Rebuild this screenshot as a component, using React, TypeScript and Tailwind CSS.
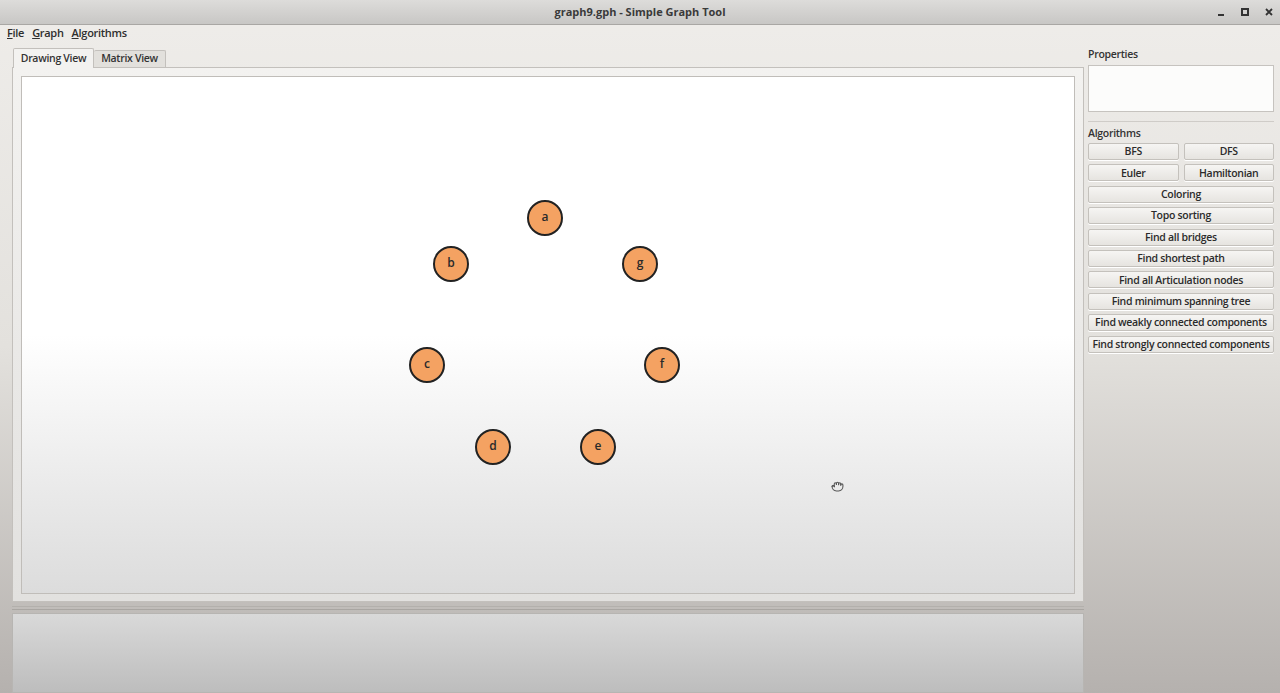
import { FunctionComponent } from 'react';
import { HandGrab } from 'lucide-react';

//  ---------------------------------------------------------------------------
//  DATA
//  ---------------------------------------------------------------------------

const nodes = [
  { id: 'a', x: 523, y: 141 },
  { id: 'b', x: 429, y: 187 },
  { id: 'g', x: 618, y: 187 },
  { id: 'c', x: 405, y: 288 },
  { id: 'f', x: 640, y: 288 },
  { id: 'd', x: 471, y: 370 },
  { id: 'e', x: 576, y: 370 },
];

const singleButtons = [
  'Coloring',
  'Topo sorting',
  'Find all bridges',
  'Find shortest path',
  'Find all Articulation nodes',
  'Find minimum spanning tree',
  'Find weakly connected components',
  'Find strongly connected components',
];

const font = { fontFamily: '"Open Sans", "DejaVu Sans", sans-serif' };

//  ---------------------------------------------------------------------------
//  UI
//  ---------------------------------------------------------------------------

const Button: FunctionComponent<{ label: string }> = ({ label }) => (
  <button className="flex h-[17px] w-full items-center justify-center rounded-[2px] border border-[#c4c1bc] bg-gradient-to-b from-[#f6f5f3] to-[#e6e4e0] text-[10.5px] font-semibold leading-none tracking-[-0.3px] text-[#2b2b2b] shadow-[0_1px_0_#fff]">
    {label}
  </button>
);

const Node: FunctionComponent<{ id: string; x: number; y: number }> = ({ id, x, y }) => (
  <div
    className="absolute flex h-[36px] w-[36px] items-center justify-center rounded-full border-2 border-[#222] bg-[#f4a262] text-[12px] font-semibold text-[#2a2a2a]"
    style={{ left: x - 18, top: y - 18 }}
  >
    <span className="-mt-[2px]">{id}</span>
  </div>
);

const TitleBar: FunctionComponent = () => (
  <div className="relative flex h-[25px] shrink-0 items-center justify-center border-b border-[#a9a7a4] bg-gradient-to-b from-[#dddcda] to-[#c8c7c5]">
    <span className="text-[11px] font-bold text-[#3a3a3a]">graph9.gph - Simple Graph Tool</span>
    <div className="absolute right-[7px] top-[8px] flex items-center gap-[16px] text-[#333]">
      <svg width="8" height="8" viewBox="0 0 8 8">
        <rect x="1" y="6" width="6" height="2" fill="#333" />
      </svg>
      <svg width="8" height="8" viewBox="0 0 8 8">
        <rect x="1" y="1" width="6" height="6" fill="none" stroke="#333" strokeWidth="2" />
      </svg>
      <svg width="8" height="8" viewBox="0 0 8 8">
        <path d="M1 1 L7 7 M7 1 L1 7" stroke="#333" strokeWidth="1.8" />
      </svg>
    </div>
  </div>
);

const MenuBar: FunctionComponent = () => (
  <div className="flex h-[17px] shrink-0 items-center gap-[8px] pl-[7px] text-[11px] font-semibold tracking-[-0.3px] text-[#2e2e2e]">
    <span>
      <span className="underline">F</span>ile
    </span>
    <span>
      <span className="underline">G</span>raph
    </span>
    <span>
      <span className="underline">A</span>lgorithms
    </span>
  </div>
);

const App: FunctionComponent = () => {
  return (
    <div
      className="flex h-[693px] w-[1280px] flex-col overflow-hidden bg-gradient-to-b from-[#efedea] via-[#e3e1dd] to-[#b5b1ae]"
      style={font}
    >
      <TitleBar />
      <MenuBar />

      <div className="flex min-h-0 flex-1 pl-[12px] pt-[6px]">
        {/* left: tabs + canvas + bottom panel */}
        <div className="flex w-[1072px] flex-col">
          <div className="flex h-[19px] items-end pl-[1px] text-[10.5px] font-semibold tracking-[-0.3px] text-[#333]">
            <div className="relative z-10 -mb-px flex h-[20px] w-[81px] items-center justify-center rounded-t-[2px] border border-b-0 border-[#c3c0bc] bg-[#f3f2f0]">
              Drawing View
            </div>
            <div className="flex h-[17px] w-[72px] items-center justify-center rounded-t-[2px] border border-b-0 border-l-0 border-[#c3c0bc] bg-[#e2e0dc]">
              Matrix View
            </div>
          </div>

          <div className="flex h-[535px] flex-col border border-[#c3c0bc] bg-gradient-to-b from-[#f3f2f0] to-[#e2e1df] px-[8px] pb-[7px] pt-[8px]">
            <div className="relative flex-1 overflow-hidden border border-[#c0bdb9] bg-gradient-to-b from-white via-white to-[#dcdcdc]">
              {nodes.map((n) => (
                <Node key={n.id} {...n} />
              ))}
              <HandGrab className="absolute left-[809px] top-[402px] h-[13px] w-[13px] text-[#555]" strokeWidth={2} />
            </div>
          </div>

          {/* splitter */}
          <div className="flex h-[11px] flex-col justify-center gap-[2px]">
            <div className="h-px bg-[#b3b0ac]" />
            <div className="h-px bg-[#a9a6a2]" />
          </div>

          <div className="flex-1 border border-[#b7b5b2] bg-gradient-to-b from-[#d9d9d9] to-[#bdbdbd]" />
        </div>

        {/* right: properties + algorithms */}
        <div className="ml-[4px] flex w-[186px] flex-col text-[10.5px] font-semibold tracking-[-0.3px] text-[#333]">
          <div className="-mt-[2px] flex h-[17px] items-center">Properties</div>
          <div className="mt-[2px] h-[47px] border border-[#c6c3bf] bg-[#fcfcfb]" />
          <div className="mt-[9px] h-px bg-[#cfccc8]" />
          <div className="mt-[2px] flex h-[19px] items-center">Algorithms</div>
          <div className="flex flex-col gap-[4.4px]">
            <div className="flex gap-[5px]">
              <Button label="BFS" />
              <Button label="DFS" />
            </div>
            <div className="flex gap-[5px]">
              <Button label="Euler" />
              <Button label="Hamiltonian" />
            </div>
            {singleButtons.map((b) => (
              <Button key={b} label={b} />
            ))}
          </div>
        </div>
      </div>
    </div>
  );
};

export default App;
